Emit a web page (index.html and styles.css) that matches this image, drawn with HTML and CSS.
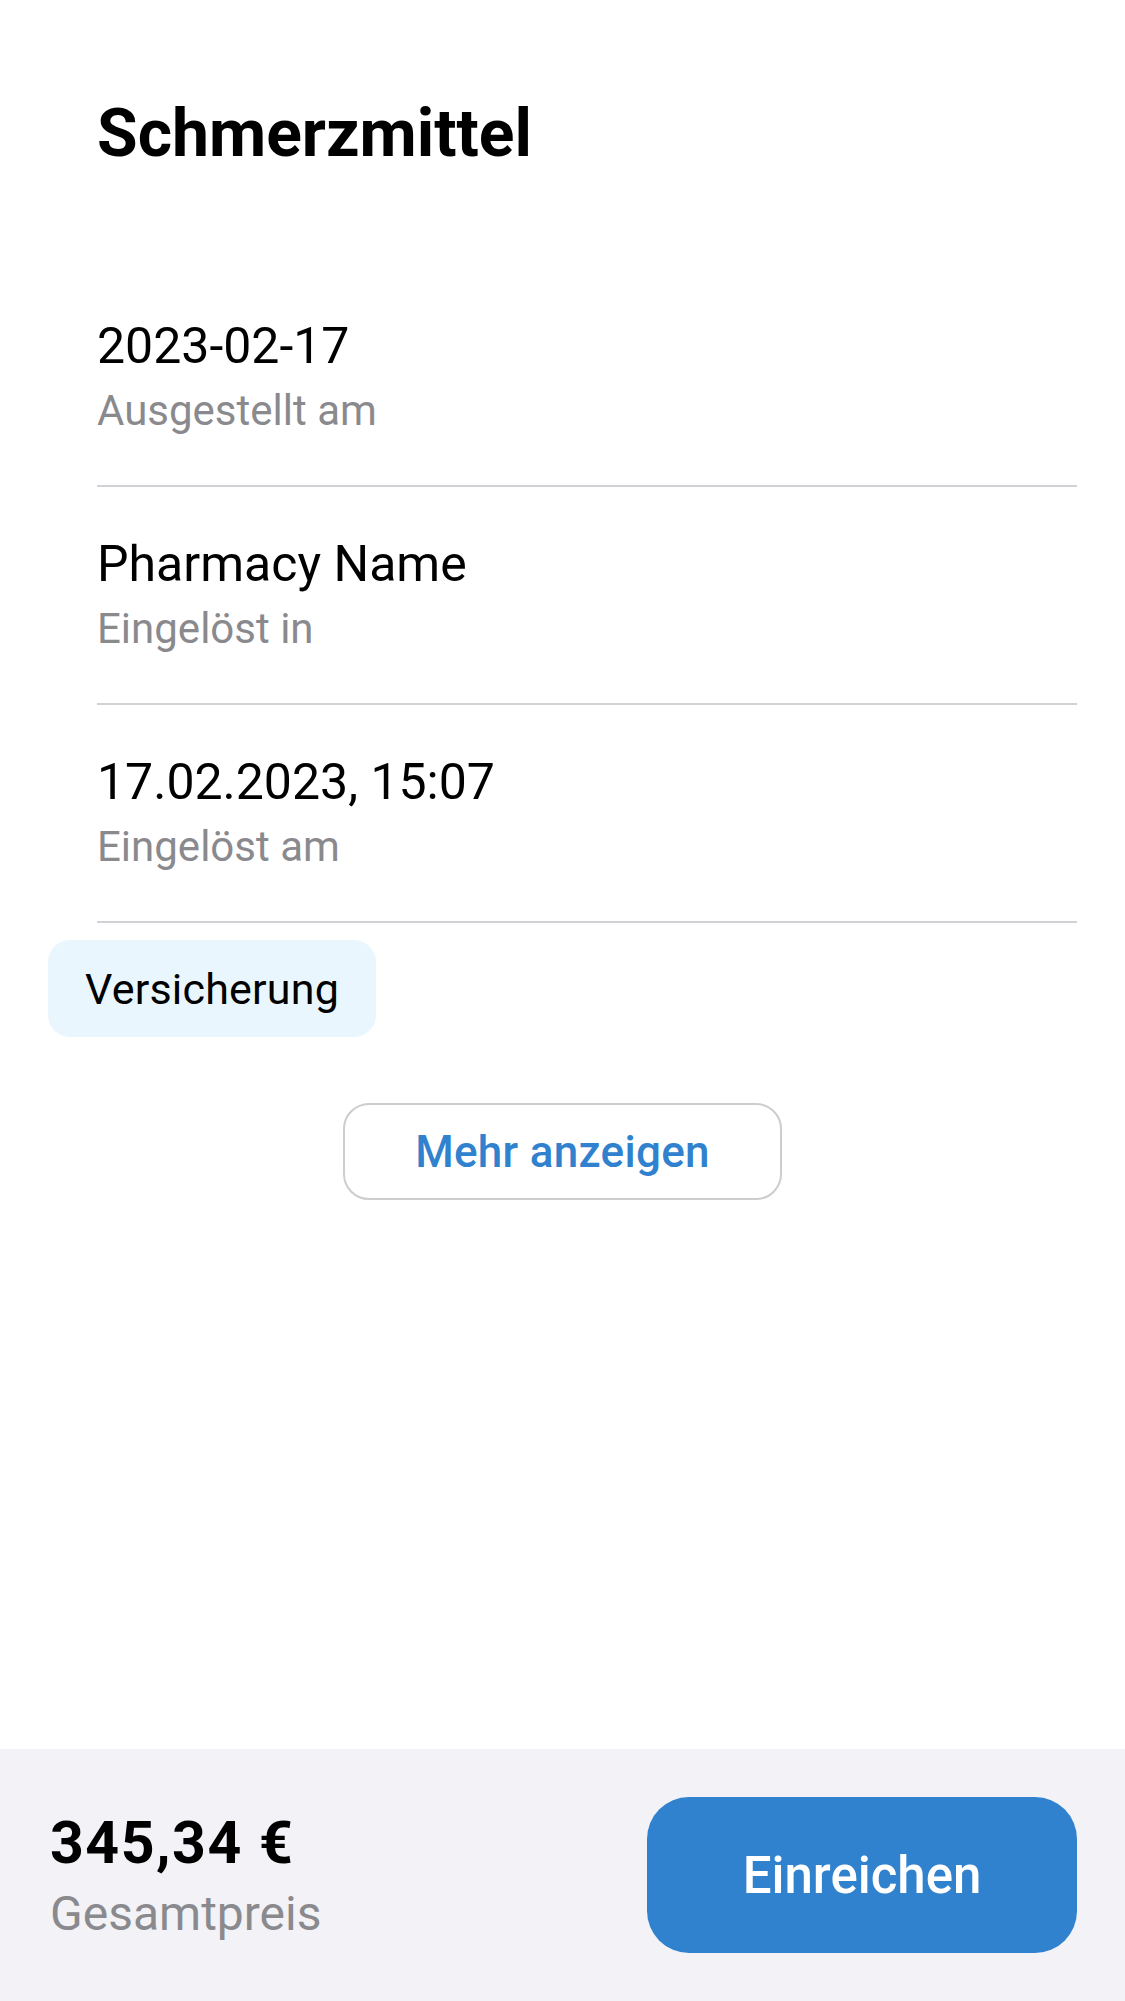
FILE: index.html
```html
<!DOCTYPE html>
<html lang="de">
<head>
<meta charset="utf-8">
<title>Schmerzmittel</title>
<link rel="stylesheet" href="styles.css">
</head>
<body>
<div class="screen">
  <main class="content">
    <h1 class="title">Schmerzmittel</h1>
    <ul class="rows">
      <li class="row">
        <div class="value">2023-02-17</div>
        <div class="label">Ausgestellt am</div>
      </li>
      <li class="row">
        <div class="value">Pharmacy Name</div>
        <div class="label">Eingelöst in</div>
      </li>
      <li class="row">
        <div class="value">17.02.2023, 15:07</div>
        <div class="label">Eingelöst am</div>
      </li>
    </ul>
    <div class="chip-wrap">
      <span class="chip">Versicherung</span>
    </div>
    <div class="more-wrap">
      <button class="more">Mehr anzeigen</button>
    </div>
  </main>
  <footer class="footer">
    <div class="total">
      <div class="price">345,34 €</div>
      <div class="price-label">Gesamtpreis</div>
    </div>
    <button class="submit">Einreichen</button>
  </footer>
</div>
</body>
</html>
```
FILE: styles.css
```css
* { box-sizing: border-box; }
html, body {
  margin: 0;
  padding: 0;
  background: #ffffff;
}
body {
  font-family: Roboto, "Liberation Sans", Arial, sans-serif;
  color: #000;
  width: 1125px;
  height: 2001px;
  overflow: hidden;
}
.screen {
  display: flex;
  flex-direction: column;
  height: 2001px;
}
.content {
  flex: 1;
}
.title {
  margin: 94px 0 0 97px;
  font-size: 66px;
  line-height: 80px;
  font-weight: 700;
  letter-spacing: 0;
}
.rows {
  list-style: none;
  margin: 95px 48px 0 97px;
  padding: 0;
}
.row {
  padding: 47px 0 47px 0;
  border-bottom: 2px solid #d1d1d6;
  display: flex;
  flex-direction: column;
  gap: 8px;
}
.value {
  font-size: 50px;
  line-height: 60px;
  font-weight: 400;
}
.label {
  font-size: 42px;
  line-height: 54px;
  color: #8a8a8e;
}
.chip-wrap {
  padding: 17px 0 0 48px;
  display: flex;
}
.chip {
  display: inline-flex;
  align-items: center;
  height: 97px;
  padding: 0 37px;
  background: #eaf6fe;
  border-radius: 22px;
  font-size: 43px;
  letter-spacing: 0.2px;
  color: #000;
}
.more-wrap {
  display: flex;
  justify-content: center;
  padding-top: 66px;
}
.more {
  width: 439px;
  height: 97px;
  background: #fff;
  border: 2px solid #cdcdd0;
  border-radius: 26px;
  font-family: Roboto, "Liberation Sans", Arial, sans-serif;
  font-size: 44px;
  font-weight: 500;
  letter-spacing: 0.3px;
  color: #3182ce;
  padding: 0;
}
.footer {
  height: 252px;
  background: #f2f2f7;
  display: flex;
  align-items: center;
  justify-content: space-between;
  padding: 0 48px 0 50px;
}
.total {
  display: flex;
  flex-direction: column;
  gap: 9px;
}
.price {
  font-size: 59px;
  line-height: 68px;
  font-weight: 700;
  letter-spacing: 1.5px;
}
.price-label {
  font-size: 48px;
  line-height: 56px;
  color: #8a8a8e;
}
.submit {
  width: 430px;
  height: 156px;
  background: #3182ce;
  border: none;
  border-radius: 42px;
  color: #fff;
  font-family: Roboto, "Liberation Sans", Arial, sans-serif;
  font-size: 51px;
  font-weight: 500;
  padding: 0;
}
```
